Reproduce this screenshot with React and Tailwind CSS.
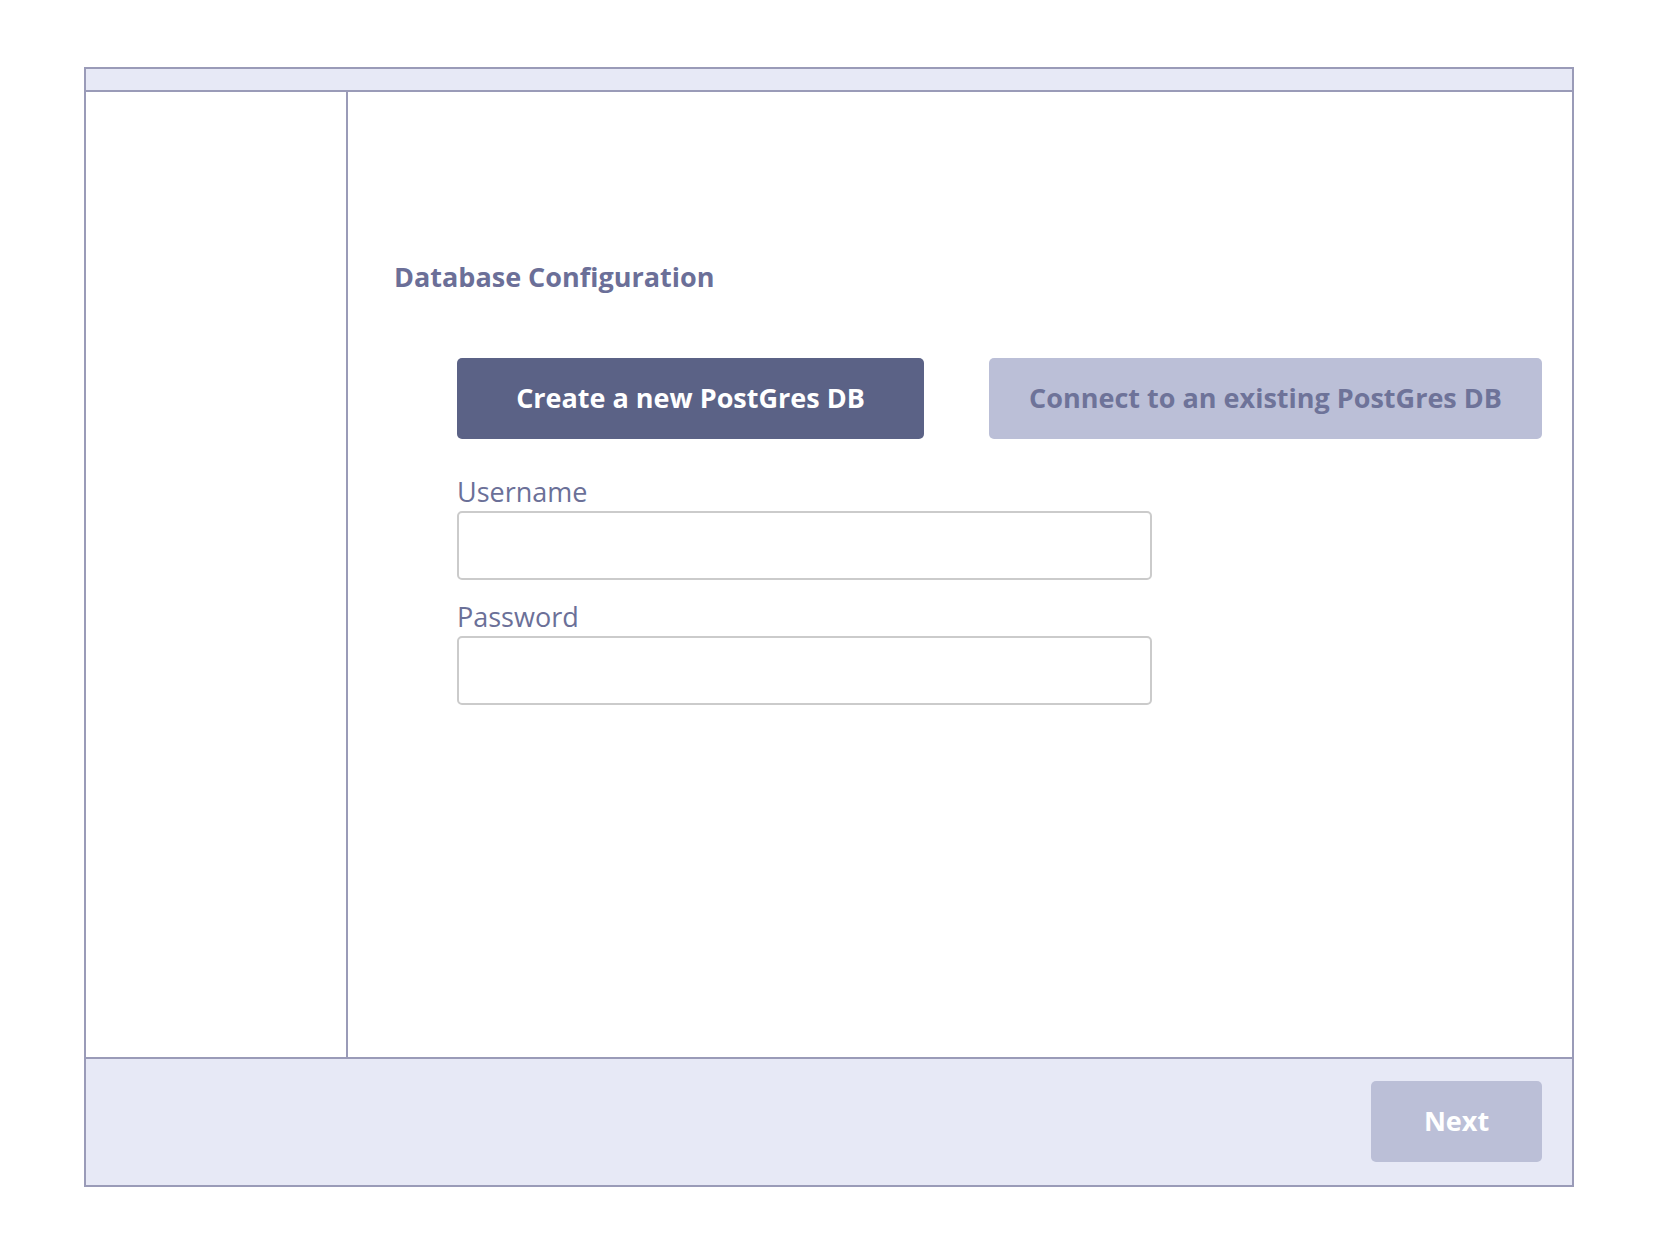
export default function App() {
  const font = { fontFamily: '"Open Sans", "Noto Sans", sans-serif' };
  return (
    <div className="w-full h-[1250px] bg-white pl-[84px] pt-[67px]" style={font}>
      <div className="w-[1490px] h-[1120px] border-2 border-[#9a9bb8] flex flex-col">
        <div className="h-[23px] bg-[#e7e9f6] border-b-2 border-[#9a9bb8] shrink-0" />
        <div className="flex flex-1 min-h-0">
          <div className="w-[262px] border-r-2 border-[#9a9bb8] shrink-0" />
          <div className="flex-1 pl-[46px] pt-[167px]">
            <h1 className="text-[27px] leading-[36px] font-bold text-[#6b6f98]">Database Configuration</h1>
            <div className="pl-[63px] pt-[63px]">
              <div className="flex gap-[65px]">
                <button className="w-[467px] h-[81px] rounded-[5px] bg-[#5b6286] text-white text-[27px] font-bold">
                  Create a new PostGres DB
                </button>
                <button className="w-[553px] h-[81px] rounded-[5px] bg-[#bbbfd7] text-[#6e7399] text-[27px] font-bold">
                  Connect to an existing PostGres DB
                </button>
              </div>
              <div className="pt-[36px] flex flex-col">
                <label className="text-[27px] leading-[34px] text-[#6b7098]">Username</label>
                <div className="w-[695px] h-[69px] mt-[2px] rounded-[5px] border-2 border-[#cbcbcb] bg-white" />
                <label className="mt-[20px] text-[27px] leading-[34px] text-[#6b7098]">Password</label>
                <div className="w-[695px] h-[69px] mt-[2px] rounded-[5px] border-2 border-[#cbcbcb] bg-white" />
              </div>
            </div>
          </div>
        </div>
        <div className="h-[128px] shrink-0 bg-[#e7e9f6] border-t-2 border-[#9a9bb8] flex justify-end items-start pt-[22px] pr-[30px]">
          <button className="w-[171px] h-[81px] rounded-[5px] bg-[#bbbfd7] text-white text-[27px] font-bold">
            Next
          </button>
        </div>
      </div>
    </div>
  );
}
